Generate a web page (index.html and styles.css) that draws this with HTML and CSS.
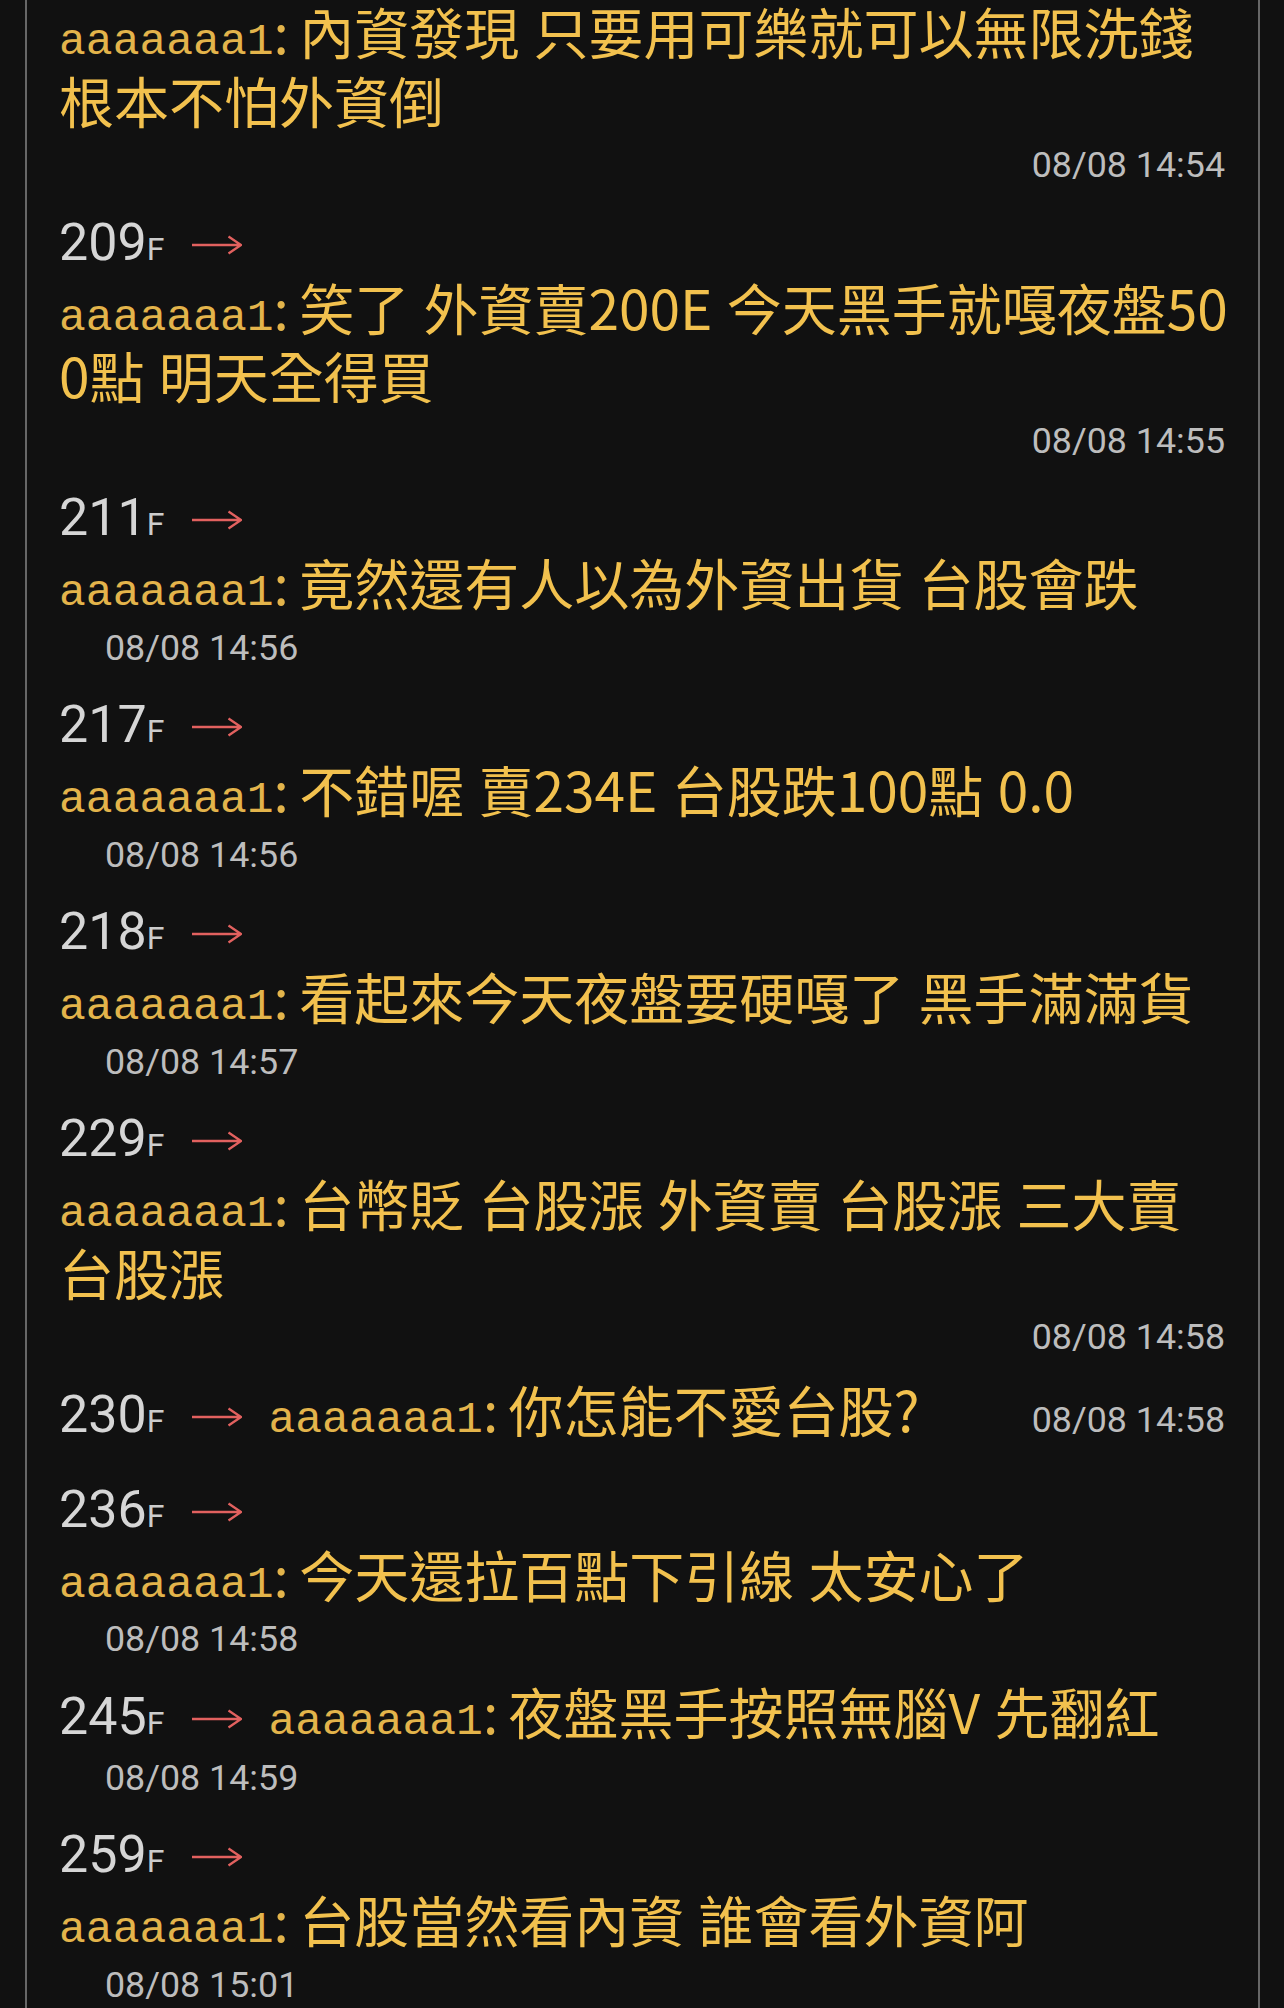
FILE: index.html
```html
<!DOCTYPE html>
<html lang="zh-Hant">
<head>
<meta charset="utf-8">
<title>推文</title>
<link rel="stylesheet" href="styles.css">
</head>
<body>
<div class="thread">

  <div class="post post-first">
    <p class="msg"><span class="user">aaaaaaa1</span><span class="colon">: </span>內資發現 只要用可樂就可以無限洗錢根本不怕外資倒</p>
    <p class="time time-right">08/08 14:54</p>
  </div>

  <div class="post">
    <div class="floor"><span class="num">209</span><span class="f">F</span><svg class="arrow" viewBox="0 0 50 20" width="50" height="20" aria-label="→"><path d="M0 10H48.5M36.5 1.5L49 10L36.5 18.5"/></svg></div>
    <p class="msg"><span class="user">aaaaaaa1</span><span class="colon">: </span>笑了 外資賣200E 今天黑手就嘎夜盤500點 明天全得買</p>
    <p class="time time-right">08/08 14:55</p>
  </div>

  <div class="post">
    <div class="floor"><span class="num">211</span><span class="f">F</span><svg class="arrow" viewBox="0 0 50 20" width="50" height="20" aria-label="→"><path d="M0 10H48.5M36.5 1.5L49 10L36.5 18.5"/></svg></div>
    <p class="msg"><span class="user">aaaaaaa1</span><span class="colon">: </span>竟然還有人以為外資出貨 台股會跌</p>
    <p class="time time-left">08/08 14:56</p>
  </div>

  <div class="post">
    <div class="floor"><span class="num">217</span><span class="f">F</span><svg class="arrow" viewBox="0 0 50 20" width="50" height="20" aria-label="→"><path d="M0 10H48.5M36.5 1.5L49 10L36.5 18.5"/></svg></div>
    <p class="msg"><span class="user">aaaaaaa1</span><span class="colon">: </span>不錯喔 賣234E 台股跌100點 0.0</p>
    <p class="time time-left">08/08 14:56</p>
  </div>

  <div class="post">
    <div class="floor"><span class="num">218</span><span class="f">F</span><svg class="arrow" viewBox="0 0 50 20" width="50" height="20" aria-label="→"><path d="M0 10H48.5M36.5 1.5L49 10L36.5 18.5"/></svg></div>
    <p class="msg"><span class="user">aaaaaaa1</span><span class="colon">: </span>看起來今天夜盤要硬嘎了 黑手滿滿貨</p>
    <p class="time time-left">08/08 14:57</p>
  </div>

  <div class="post">
    <div class="floor"><span class="num">229</span><span class="f">F</span><svg class="arrow" viewBox="0 0 50 20" width="50" height="20" aria-label="→"><path d="M0 10H48.5M36.5 1.5L49 10L36.5 18.5"/></svg></div>
    <p class="msg"><span class="user">aaaaaaa1</span><span class="colon">: </span>台幣貶 台股漲 外資賣 台股漲 三大賣台股漲</p>
    <p class="time time-right">08/08 14:58</p>
  </div>

  <div class="post post-inline-time">
    <div class="floor"><span class="time time-float">08/08 14:58</span><span class="num">230</span><span class="f">F</span><svg class="arrow" viewBox="0 0 50 20" width="50" height="20" aria-label="→"><path d="M0 10H48.5M36.5 1.5L49 10L36.5 18.5"/></svg><span class="user user-inline">aaaaaaa1</span><span class="msg-inline"><span class="colon">: </span>你怎能不愛台股?</span></div>
  </div>

  <div class="post">
    <div class="floor"><span class="num">236</span><span class="f">F</span><svg class="arrow" viewBox="0 0 50 20" width="50" height="20" aria-label="→"><path d="M0 10H48.5M36.5 1.5L49 10L36.5 18.5"/></svg></div>
    <p class="msg"><span class="user">aaaaaaa1</span><span class="colon">: </span>今天還拉百點下引線 太安心了</p>
    <p class="time time-left">08/08 14:58</p>
  </div>

  <div class="post">
    <div class="floor"><span class="num">245</span><span class="f">F</span><svg class="arrow" viewBox="0 0 50 20" width="50" height="20" aria-label="→"><path d="M0 10H48.5M36.5 1.5L49 10L36.5 18.5"/></svg><span class="user user-inline">aaaaaaa1</span><span class="msg-inline"><span class="colon">: </span>夜盤黑手按照無腦V 先翻紅</span></div>
    <p class="time time-left">08/08 14:59</p>
  </div>

  <div class="post">
    <div class="floor"><span class="num">259</span><span class="f">F</span><svg class="arrow" viewBox="0 0 50 20" width="50" height="20" aria-label="→"><path d="M0 10H48.5M36.5 1.5L49 10L36.5 18.5"/></svg></div>
    <p class="msg"><span class="user">aaaaaaa1</span><span class="colon">: </span>台股當然看內資 誰會看外資阿</p>
    <p class="time time-left">08/08 15:01</p>
  </div>

</div>
</body>
</html>
```

FILE: styles.css
```css
html, body {
  margin: 0;
  padding: 0;
  background: #111111;
}

body {
  font-family: "Noto Sans CJK TC", "Noto Sans", sans-serif;
  overflow: hidden;
}

.thread {
  box-sizing: border-box;
  min-height: 2008px;
  margin: 0 24px 0 25px;
  padding: 0 26px 0 32px;
  border-left: 2px solid #676767;
  border-right: 2px solid #676767;
}

.post {
  padding-bottom: 16.5px;
}

.post-first {
  margin-top: -4px;
}

.post-inline-time {
  padding-bottom: 37px;
}

.floor {
  height: 58px;
  line-height: 58px;
  font-family: Roboto, "Noto Sans", sans-serif;
  font-size: 52px;
  color: #d6d6d6;
  white-space: nowrap;
}

.num {
  color: #d6d6d6;
}

.f {
  font-size: 32px;
  line-height: 0.8;
  color: #cccccc;
}

.arrow {
  display: inline-block;
  vertical-align: 5px;
  margin-left: 28px;
  fill: none;
  stroke: #e2615f;
  stroke-width: 2.3;
}

.msg {
  margin: 0;
  font-family: "Noto Sans CJK TC", "Noto Sans", sans-serif;
  font-size: 55px;
  line-height: 68.5px;
  color: #f2c14e;
  word-break: break-all;
  word-spacing: 2px;
}

.user {
  font-family: "Liberation Mono", "DejaVu Sans Mono", monospace;
  font-size: 44.7px;
  line-height: 0.8;
  color: #e3b44b;
  word-spacing: 0;
}

.colon {
  color: #e3b44b;
  word-spacing: 0;
  margin-right: -2px;
}

.user-inline {
  margin-left: 26px;
}

.msg-inline {
  font-family: "Noto Sans CJK TC", "Noto Sans", sans-serif;
  font-size: 55px;
  line-height: 0.8;
  color: #f2c14e;
  word-spacing: 2px;
}

.time {
  margin: 0;
  font-family: Roboto, "Noto Sans", sans-serif;
  font-size: 35.8px;
  line-height: 64px;
  color: #bdbdbd;
  white-space: nowrap;
  word-spacing: 0;
}

.time-right {
  text-align: right;
  padding-right: 7px;
}

.time-left {
  padding-left: 46px;
}

.time-float {
  float: right;
  line-height: 68px;
  padding-right: 7px;
}
```
